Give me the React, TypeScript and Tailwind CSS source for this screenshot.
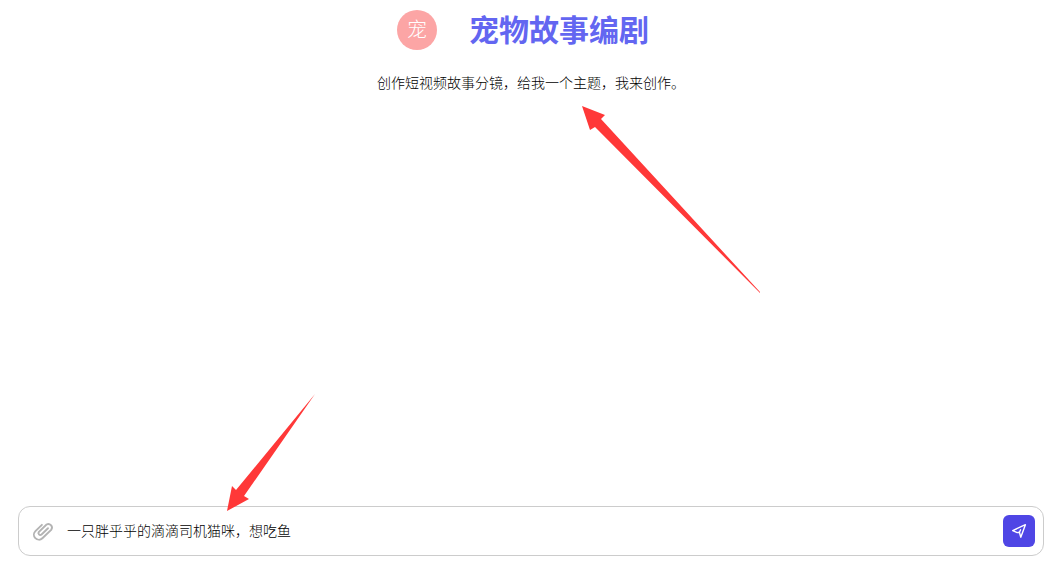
import { useState } from "react";

const fontStack =
  "font-['Liberation_Sans','Noto_Sans_CJK_SC',sans-serif]";

function Header() {
  return (
    <header className="flex flex-col items-center pt-[9px]">
      <div className="flex items-center gap-8 pr-4">
        <div className="flex size-10 items-center justify-center rounded-full bg-[#fca5a5] text-xl font-light text-white">
          宠
        </div>
        <h1 className="pt-0.5 text-3xl leading-10 font-bold text-[#6366f1]">
          宠物故事编剧
        </h1>
      </div>
      <p className="mt-[22px] text-sm leading-5 font-light text-black">
        创作短视频故事分镜，给我一个主题，我来创作。
      </p>
    </header>
  );
}

function ClipIcon() {
  return (
    <svg
      viewBox="0 0 24 24"
      className="size-6"
      fill="none"
      stroke="currentColor"
      strokeWidth="1.9"
      strokeLinecap="round"
      aria-hidden="true"
    >
      <path
        transform="rotate(-44 12 12)"
        d="M15.5 6.8H6.5A5 5 0 0 0 6.5 16.8H19A3.6 3.6 0 0 0 19 9.8H8.2A1.9 1.9 0 0 0 8.2 13.5H17.5"
      />
    </svg>
  );
}

function SendIcon() {
  return (
    <svg
      viewBox="0 0 16 16"
      className="size-4"
      fill="none"
      stroke="currentColor"
      strokeWidth="1.4"
      strokeLinejoin="round"
      strokeLinecap="round"
      aria-hidden="true"
    >
      <path d="M1.7 7.6L14.4 1.7L9.8 14.2L8.4 9.2L6.2 9.6Z" />
      <path d="M8.4 9.2L9.6 6.8" />
    </svg>
  );
}

function Composer() {
  const [message, setMessage] = useState("一只胖乎乎的滴滴司机猫咪，想吃鱼");

  return (
    <form
      onSubmit={(e) => e.preventDefault()}
      className="flex items-center rounded-xl border border-[#cccccc] bg-white p-2"
    >
      <button
        type="button"
        aria-label="上传附件"
        className="flex size-8 items-center justify-center text-[#b3b3b3]"
      >
        <ClipIcon />
      </button>
      <input
        aria-label="输入内容"
        value={message}
        onChange={(e) => setMessage(e.target.value)}
        className="min-w-0 flex-1 px-2 text-sm font-light text-black outline-none"
      />
      <button
        type="submit"
        aria-label="发送"
        className="flex size-8 items-center justify-center rounded-md bg-[#4f46e5] text-white"
      >
        <SendIcon />
      </button>
    </form>
  );
}

// Hand-drawn style pointers laid over the page
function Pointers() {
  return (
    <svg
      className="pointer-events-none absolute top-0 left-0"
      width="1064"
      height="565"
      fill="#ff3838"
      aria-hidden="true"
    >
      <path d="M582 106L605 115L601 119L760 292L760 293L595 127L590 130Z" />
      <path d="M227 511L232 486L236 490L315 394L244 496L249 499Z" />
    </svg>
  );
}

export default function App() {
  return (
    <div
      className={`relative flex min-h-screen flex-col justify-between overflow-hidden bg-white pr-5 pb-[9px] pl-[18px] ${fontStack}`}
    >
      <Header />
      <Composer />
      <Pointers />
    </div>
  );
}
